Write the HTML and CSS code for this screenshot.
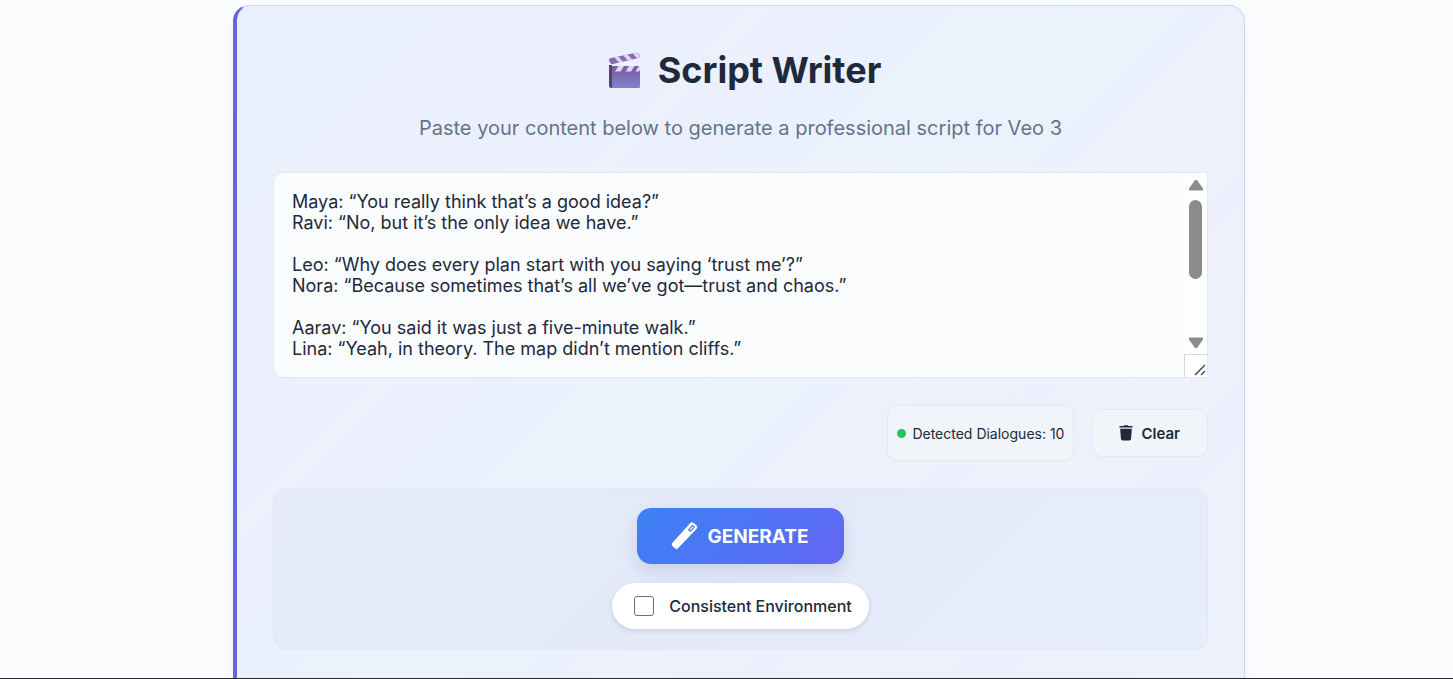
FILE: index.html
```html
<!DOCTYPE html>
<html lang="en">
<head>
<meta charset="utf-8">
<meta name="viewport" content="width=device-width, initial-scale=1">
<title>Script Writer</title>
<link rel="stylesheet" href="styles.css">
</head>
<body>
<main class="page">
  <section class="card">
    <h1 class="title">
      <svg class="clapper" viewBox="0 0 34 38" aria-hidden="true">
        <defs>
          <linearGradient id="slate" x1="0" y1="0" x2="0" y2="1"><stop offset="0" stop-color="#7a5d9e"/><stop offset="1" stop-color="#8081cb"/></linearGradient>
          <clipPath id="arm"><path d="M1 8.200Q1 7.500 2 7.200L28 1.700Q31 1.500 31.600 4v2.800L4 13.200Q1.600 12.500 1 8.200Z"/></clipPath>
        </defs>
        <g clip-path="url(#arm)">
          <path fill="#8e68ad" d="M0 0h34v15H0z"/>
          <path fill="#dcd6fb" d="M6 6 10 5 16 12 12 13zM15 4 19 3 25 9 21 11zM24.500 2 28.500 1 34 6.500 30 8.500z"/>
        </g>
        <path fill="url(#slate)" d="M1 15h31v20.500a1.500 1.500 0 0 1-1.500 1.500H3.500A2.500 2.500 0 0 1 1 34.500z"/>
        <path fill="#52406e" d="M1 14h3v23Q1 37 1 34z"/>
        <path fill="#825ea3" d="M4 15h28v5.500H4z"/>
        <path fill="#dcd6fb" d="M10.500 15H16l-3.500 5.500H7zM21 15h5.500L23 20.500h-5.500zM31 15h1v4l-1 1.500h-3.500z"/>
      </svg>
      <span>Script Writer</span>
    </h1>
    <p class="subtitle">Paste your content below to generate a professional script for Veo 3</p>

    <div class="editor">
      <textarea class="editor-text" aria-label="Script content" spellcheck="false">Maya: “You really think that’s a good idea?”
Ravi: “No, but it’s the only idea we have.”

Leo: “Why does every plan start with you saying ‘trust me’?”
Nora: “Because sometimes that’s all we’ve got—trust and chaos.”

Aarav: “You said it was just a five-minute walk.”
Lina: “Yeah, in theory. The map didn’t mention cliffs.”</textarea>
      <div class="scrollbar" aria-hidden="true">
        <svg class="arrow" viewBox="0 0 16 12"><path d="M6.700 1.500Q8 0 9.300 1.500L15 9.500Q15.500 11.500 14 11.500H2Q.5 11.500 1 9.500Z"/></svg>
        <span class="thumb"></span>
        <svg class="arrow arrow-down" viewBox="0 0 16 12"><path d="M6.700 10.500Q8 12 9.300 10.500L15 2.500Q15.500 .5 14 .5H2Q.5 .5 1 2.500Z"/></svg>
        <span class="grip"><svg viewBox="0 0 12 12"><path d="M1 11 11 1M7 11l4-4"/></svg></span>
      </div>
    </div>

    <div class="tools">
      <div class="status"><span class="dot"></span><span>Detected Dialogues: 10</span></div>
      <button class="clear" type="button">
        <svg viewBox="0 0 14 16" aria-hidden="true"><path d="M4.500 1 5.200.3h3.600l.7.700H13a.7.700 0 0 1 .7.700V2.500H.3v-.8A.7.700 0 0 1 1 1zM1.200 3.700h11.600l-.7 10a1.800 1.800 0 0 1-1.800 1.700H3.700a1.800 1.800 0 0 1-1.800-1.700z"/></svg>
        <span>Clear</span>
      </button>
    </div>

    <div class="actions">
      <button class="generate" type="button">
        <svg viewBox="0 0 28 30" aria-hidden="true">
          <path fill="#fff" d="M20.300 2Q21.800.7 23.300 1.800L26.500 4.500Q28 6 26.700 7.700L8 27.200Q6.700 28.700 5.200 27.500L2.300 25Q1 23.500 2.300 22z"/>
          <path fill="none" stroke="#5a7cf4" stroke-width="1.200" stroke-linejoin="round" d="M22.500 4.500 24.300 6 20.300 10.300 18.500 8.800z"/>
        </svg>
        <span>GENERATE</span>
      </button>
      <label class="option"><input class="check" type="checkbox"><span>Consistent Environment</span></label>
    </div>
  </section>
</main>
</body>
</html>
```
FILE: styles.css
```css
* {
  box-sizing: border-box;
}

body {
  margin: 0;
  height: 100vh;
  overflow: hidden;
  border-bottom: 1px solid #25282f;
  background: #fbfcfe;
  color: #1e293b;
  font-family: Inter, "Liberation Sans", sans-serif;
}

button,
textarea {
  font-family: inherit;
  color: inherit;
}

.page {
  height: 100%;
  padding: 5px 0 0 25px;
}

.card {
  max-width: 1012px;
  height: 100%;
  margin: 0 auto;
  padding: 36px 36px 0;
  border: 1px solid #c9d8f2;
  border-bottom: 0;
  border-left: 4px solid #6366e0;
  border-radius: 16px 16px 0 0;
  background: linear-gradient(135deg, #e8f0fc 0%, #ecf0fc 25%, #eaf2fc 50%, #eef0fc 75%, #ecf1fc 100%);
  box-shadow: 0 4px 12px rgba(99, 130, 200, 0.08);
}

.title {
  display: flex;
  align-items: center;
  justify-content: center;
  gap: 16px;
  margin: 0;
  padding-left: 8px;
  font-size: 36px;
  line-height: 56px;
  font-weight: 700;
}

.clapper {
  width: 34px;
  height: 38px;
}

.subtitle {
  margin: 16px 0 30px;
  color: #64748b;
  font-size: 20px;
  line-height: 28px;
  text-align: center;
}

.editor {
  position: relative;
}

.editor-text {
  display: block;
  width: 100%;
  height: 206px;
  padding: 18px 40px 18px 18px;
  overflow: hidden;
  resize: none;
  border: 1px solid #e2e8f0;
  border-radius: 10px 0 0 10px;
  outline: 0;
  background: #fafcfe;
  font-size: 18px;
  line-height: 21px;
}

.scrollbar {
  position: absolute;
  top: 1px;
  right: 1px;
  bottom: 1px;
  width: 23px;
  display: flex;
  flex-direction: column;
  align-items: center;
  padding-top: 6px;
  background: #fcfdfe;
}

.arrow {
  width: 16px;
  height: 12px;
  fill: #8b8b8b;
}

.thumb {
  width: 13px;
  height: 79px;
  margin-top: 9px;
  border-radius: 7px;
  background: #8b8b8b;
}

.arrow-down {
  margin: auto 0 5px;
}

.grip {
  display: flex;
  align-items: flex-end;
  justify-content: flex-end;
  width: 100%;
  height: 23px;
  padding: 1px;
  border-top: 1px solid #d5d7da;
  border-left: 1px solid #d5d7da;
  background: #fff;
}

.grip svg {
  width: 12px;
  height: 12px;
  fill: none;
  stroke: #4c4c4c;
  stroke-width: 1.5;
}

.tools {
  display: flex;
  align-items: center;
  justify-content: flex-end;
  gap: 18px;
  margin-top: 27px;
}

.status {
  display: flex;
  align-items: center;
  gap: 6px;
  height: 56px;
  padding: 0 9px;
  border: 1px solid #e2e8f0;
  border-radius: 10px;
  background: #f1f5f9;
  font-size: 14px;
}

.dot {
  width: 9px;
  height: 9px;
  border-radius: 50%;
  background: #22c55e;
}

.clear {
  display: flex;
  align-items: center;
  gap: 8px;
  height: 48px;
  padding: 0 27px 0 26px;
  border: 1px solid #e2e8f0;
  border-radius: 10px;
  background: #f1f5f9;
  font-size: 15px;
  font-weight: 600;
}

.clear svg {
  width: 14px;
  height: 16px;
  fill: #1e293b;
}

.actions {
  display: flex;
  flex-direction: column;
  align-items: center;
  gap: 19px;
  margin-top: 27px;
  padding: 19px 18px 20px;
  border: 1px solid #e1e7f3;
  border-radius: 14px;
  background: linear-gradient(135deg, #e6ebf9, #e3e9f8 50%, #e7eefb);
}

.generate {
  display: flex;
  align-items: center;
  gap: 9px;
  height: 56px;
  padding: 0 35px 0 33px;
  border: 0;
  border-radius: 14px;
  background: linear-gradient(135deg, #3b82f6, #6366f1);
  box-shadow: 0 8px 16px rgba(60, 80, 130, 0.14);
  color: #fff;
  font-size: 19px;
  font-weight: 700;
}

.generate svg {
  width: 28px;
  height: 30px;
}

.option {
  display: flex;
  align-items: center;
  gap: 15px;
  height: 46px;
  padding: 0 17px 0 22px;
  border-radius: 23px;
  background: #fff;
  box-shadow: 0 2px 4px 1px rgba(60, 80, 130, 0.12);
  font-size: 16px;
  font-weight: 500;
}

.check {
  appearance: none;
  width: 20px;
  height: 20px;
  margin: 0;
  border: 1px solid #6b6e75;
  border-radius: 3px;
  background: #fff;
}

.check:checked {
  background: #6366f1;
}
```
